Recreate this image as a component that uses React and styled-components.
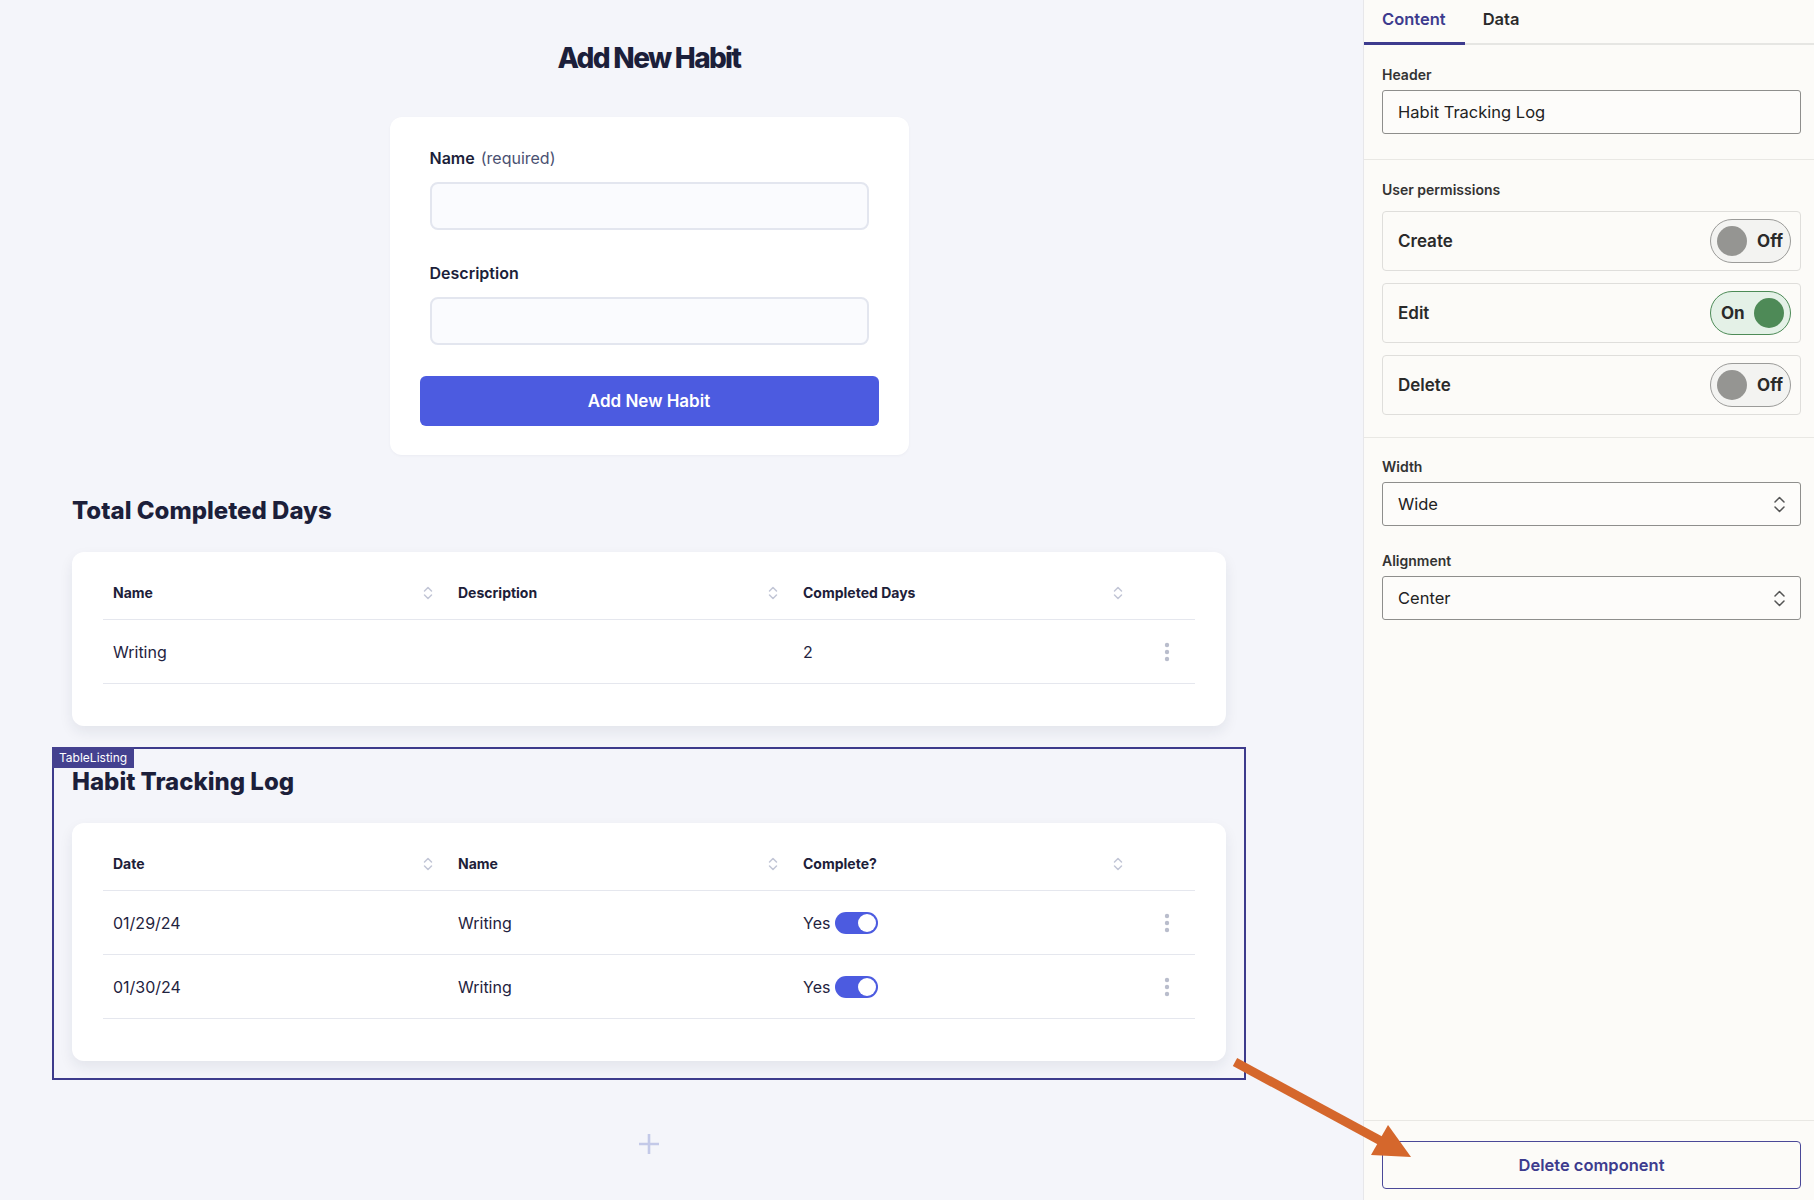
import styled, { createGlobalStyle } from "styled-components";

const GlobalStyle = createGlobalStyle`
  * { box-sizing: border-box; }
  html, body, #root { margin: 0; padding: 0; height: 100%; }
  body {
    font-family: Inter, "Noto Sans", "Liberation Sans", sans-serif;
    color: #1d2039;
    -webkit-font-smoothing: antialiased;
  }
`;

const Page = styled.div`
  position: relative;
  display: flex;
  height: 1200px;
  overflow: hidden;
`;

const Main = styled.main`
  flex: 1;
  background: #f4f5fa;
  padding: 40px 137px 0 72px;
`;

const PageTitle = styled.h1`
  margin: 0 0 41px;
  text-align: center;
  font-size: 28px;
  line-height: 36px;
  font-weight: 800;
  letter-spacing: -0.06em;
  color: #1c1f3a;
`;

const FormCard = styled.form`
  width: 519px;
  margin: 0 auto;
  background: #fff;
  border-radius: 12px;
  padding: 30px 30px 29px;
  box-shadow: 0 1px 3px rgba(30, 35, 80, 0.04);
`;

const Field = styled.div`
  padding: 0 10px;
  margin-bottom: 32px;
  &:nth-of-type(2) { margin-bottom: 31px; }
`;

const Label = styled.label`
  display: block;
  font-size: 16px;
  line-height: 22px;
  font-weight: 600;
  color: #1c1f3a;
  margin-bottom: 13px;
  span {
    font-weight: 400;
    color: #4a5172;
    margin-left: 6px;
  }
`;

const TextInput = styled.input`
  display: block;
  width: 100%;
  height: 48px;
  border: 2px solid #e3e6ef;
  border-radius: 8px;
  background: #fafbfe;
  font: inherit;
  outline: none;
`;

const PrimaryButton = styled.button`
  display: block;
  width: 100%;
  height: 50px;
  border: none;
  border-radius: 6px;
  background: #4c5be0;
  color: #fff;
  font-family: inherit;
  font-size: 17px;
  font-weight: 600;
`;

const Section = styled.section`
  margin-top: 40px;
`;

const SectionTitle = styled.h2`
  margin: 0 0 25px;
  font-size: 24px;
  line-height: 32px;
  font-weight: 800;
  letter-spacing: 0;
  color: #1c1f3a;
`;

const Selected = styled.div`
  position: relative;
  margin: 21px -20px 0;
  border: 2px solid #3d3b8c;
  padding: 17px 18px 17px;
`;

const Tag = styled.span`
  position: absolute;
  top: -2px;
  left: -2px;
  height: 21px;
  padding: 0 7px;
  background: #44418f;
  color: #fff;
  font-size: 12px;
  line-height: 21px;
`;

const TableCard = styled.div`
  background: #fff;
  border-radius: 12px;
  padding: 14px 31px 42px;
  box-shadow: 0 6px 14px rgba(28, 32, 70, 0.08);
`;

const Row = styled.div`
  display: grid;
  grid-template-columns: 345px 345px 345px 1fr;
  align-items: center;
  height: ${(p) => (p.$head ? 54 : 64)}px;
  border-bottom: 1px solid #e5e7ee;
`;

const HeadCell = styled.div`
  display: flex;
  align-items: center;
  justify-content: space-between;
  padding: 0 15px 0 10px;
  font-size: 14px;
  font-weight: 700;
  color: #1d2039;
`;

const Cell = styled.div`
  display: flex;
  align-items: center;
  gap: 5px;
  padding-left: 10px;
  font-size: 16px;
  color: #1f2340;
`;

const ActionCell = styled.div`
  display: flex;
  justify-content: center;
`;

const MiniSwitch = styled.span`
  position: relative;
  width: 43px;
  height: 22px;
  border-radius: 11px;
  background: #4c5be0;
  &::after {
    content: "";
    position: absolute;
    top: 2px;
    right: 2px;
    width: 18px;
    height: 18px;
    border-radius: 50%;
    background: #fff;
  }
`;

const AddRow = styled.div`
  display: flex;
  justify-content: center;
  margin-top: 54px;
`;

/* sidebar */

const Sidebar = styled.aside`
  width: 451px;
  flex-shrink: 0;
  display: flex;
  flex-direction: column;
  background: #fcfbf8;
  border-left: 1px solid #e7e7ea;
  color: #2a2a2a;
`;

const Tabs = styled.div`
  display: flex;
  height: 45px;
  border-bottom: 2px solid #e6e6e3;
`;

const Tab = styled.div`
  display: flex;
  align-items: center;
  padding: 0 19px 4px 18px;
  margin-bottom: -2px;
  font-size: 16.5px;
  font-weight: 600;
  color: ${(p) => (p.$active ? "#3d3b8e" : "#2a2a2a")};
  border-bottom: 3px solid ${(p) => (p.$active ? "#3d3b8e" : "transparent")};
`;

const Panel = styled.div`
  padding: ${(p) => p.$pad || "20px 13px 24px 18px"};
  border-bottom: 1px solid ${(p) => (p.$last ? "transparent" : "#e9e8e4")};
`;

const PanelLabel = styled.div`
  font-size: 14px;
  line-height: 20px;
  font-weight: 600;
  color: #333;
  margin-top: ${(p) => p.$top || 0}px;
  margin-bottom: ${(p) => p.$gap || 5}px;
`;

const PanelInput = styled.div`
  display: flex;
  align-items: center;
  justify-content: space-between;
  height: 44px;
  padding: 0 14px 0 15px;
  border: 1px solid #8e8e8c;
  border-radius: 3px;
  background: #fdfcfa;
  font-size: 16.5px;
  color: #222;
`;

const PermList = styled.div`
  display: flex;
  flex-direction: column;
  gap: 12px;
`;

const PermRow = styled.div`
  display: flex;
  align-items: center;
  justify-content: space-between;
  height: 60px;
  padding: 0 9px 0 15px;
  border: 1px solid #dfdedb;
  border-radius: 4px;
  font-size: 17px;
  font-weight: 600;
  color: #2a2a2a;
`;

const Toggle = styled.div`
  display: flex;
  align-items: center;
  justify-content: space-between;
  flex-direction: ${(p) => (p.$on ? "row" : "row-reverse")};
  width: 81px;
  height: 44px;
  padding: ${(p) => (p.$on ? "0 6px 0 10px" : "0 7px 0 6px")};
  border-radius: 22px;
  border: 1px solid ${(p) => (p.$on ? "#4d8b57" : "#9b9b99")};
  background: ${(p) => (p.$on ? "#e4f1e7" : "#f3f3f1")};
  font-size: 17px;
  font-weight: 700;
  color: #2a2a2a;
`;

const Knob = styled.span`
  width: 30px;
  height: 30px;
  border-radius: 50%;
  background: ${(p) => (p.$on ? "#4e8a57" : "#959592")};
`;

const Footer = styled.div`
  margin-top: auto;
  border-top: 1px solid #e9e8e4;
  padding: 20px 13px 11px 18px;
`;

const OutlineButton = styled.button`
  display: block;
  width: 100%;
  height: 48px;
  border: 1px solid #4a4898;
  border-radius: 4px;
  background: transparent;
  color: #3d3b8e;
  font-family: inherit;
  font-size: 16.5px;
  font-weight: 600;
`;

const Overlay = styled.svg`
  position: absolute;
  top: 0;
  left: 0;
  pointer-events: none;
`;

const SortIcon = () => (
  <svg width="10" height="16" viewBox="0 0 10 16" fill="none" stroke="#c2c6d6" strokeWidth="1.5" strokeLinecap="round" strokeLinejoin="round">
    <path d="M1.5 6l3.5-3.5 3.5 3.5" />
    <path d="M1.5 10l3.5 3.5 3.5-3.5" />
  </svg>
);

const Kebab = () => (
  <svg width="6" height="20" viewBox="0 0 6 20" fill="#b9bdcc">
    <circle cx="3" cy="3" r="2.2" />
    <circle cx="3" cy="10" r="2.2" />
    <circle cx="3" cy="17" r="2.2" />
  </svg>
);

const SelectChevron = () => (
  <svg width="13" height="17" viewBox="0 0 13 17" fill="none" stroke="#555" strokeWidth="1.5" strokeLinecap="round" strokeLinejoin="round">
    <path d="M2 6l4.5-4.5L11 6" />
    <path d="M2 11l4.5 4.5L11 11" />
  </svg>
);

const DataTable = ({ columns, rows }) => (
  <TableCard>
    <Row $head>
      {columns.map((c) => (
        <HeadCell key={c}>
          {c}
          <SortIcon />
        </HeadCell>
      ))}
      <div />
    </Row>
    {rows.map((r, i) => (
      <Row key={i}>
        {r.map((v, j) => (
          <Cell key={j}>{v}</Cell>
        ))}
        <ActionCell>
          <Kebab />
        </ActionCell>
      </Row>
    ))}
  </TableCard>
);

const Done = () => (
  <>
    Yes
    <MiniSwitch />
  </>
);

const perms = [
  { name: "Create", on: false },
  { name: "Edit", on: true },
  { name: "Delete", on: false },
];

export default function App() {
  return (
    <>
      <GlobalStyle />
      <Page>
        <Main>
          <PageTitle>Add New Habit</PageTitle>
          <FormCard onSubmit={(e) => e.preventDefault()}>
            <Field>
              <Label>
                Name<span>(required)</span>
              </Label>
              <TextInput />
            </Field>
            <Field>
              <Label>Description</Label>
              <TextInput />
            </Field>
            <PrimaryButton type="submit">Add New Habit</PrimaryButton>
          </FormCard>

          <Section>
            <SectionTitle>Total Completed Days</SectionTitle>
            <DataTable
              columns={["Name", "Description", "Completed Days"]}
              rows={[["Writing", "", "2"]]}
            />
          </Section>

          <Selected>
            <Tag>TableListing</Tag>
            <SectionTitle>Habit Tracking Log</SectionTitle>
            <DataTable
              columns={["Date", "Name", "Complete?"]}
              rows={[
                ["01/29/24", "Writing", <Done />],
                ["01/30/24", "Writing", <Done />],
              ]}
            />
          </Selected>

          <AddRow>
            <svg width="20" height="20" viewBox="0 0 20 20" stroke="#c3c9e8" strokeWidth="2.6">
              <path d="M10 0v20M0 10h20" />
            </svg>
          </AddRow>
        </Main>

        <Sidebar>
          <Tabs>
            <Tab $active>Content</Tab>
            <Tab>Data</Tab>
          </Tabs>
          <Panel $pad="20px 13px 25px 18px">
            <PanelLabel>Header</PanelLabel>
            <PanelInput>Habit Tracking Log</PanelInput>
          </Panel>
          <Panel $pad="20px 13px 22px 18px">
            <PanelLabel $gap={11}>User permissions</PanelLabel>
            <PermList>
              {perms.map((p) => (
                <PermRow key={p.name}>
                  {p.name}
                  <Toggle $on={p.on}>
                    {p.on ? "On" : "Off"}
                    <Knob $on={p.on} />
                  </Toggle>
                </PermRow>
              ))}
            </PermList>
          </Panel>
          <Panel $pad="19px 13px 0 18px" $last>
            <PanelLabel>Width</PanelLabel>
            <PanelInput>
              Wide
              <SelectChevron />
            </PanelInput>
            <PanelLabel $top={25}>Alignment</PanelLabel>
            <PanelInput>
              Center
              <SelectChevron />
            </PanelInput>
          </Panel>
          <Footer>
            <OutlineButton>Delete component</OutlineButton>
          </Footer>
        </Sidebar>

        <Overlay width="1814" height="1200" viewBox="0 0 1814 1200">
          <line x1="1235" y1="1062" x2="1381" y2="1141" stroke="#d5672c" strokeWidth="9" />
          <polygon points="1411,1157 1371,1155 1388,1125" fill="#d5672c" />
        </Overlay>
      </Page>
    </>
  );
}
